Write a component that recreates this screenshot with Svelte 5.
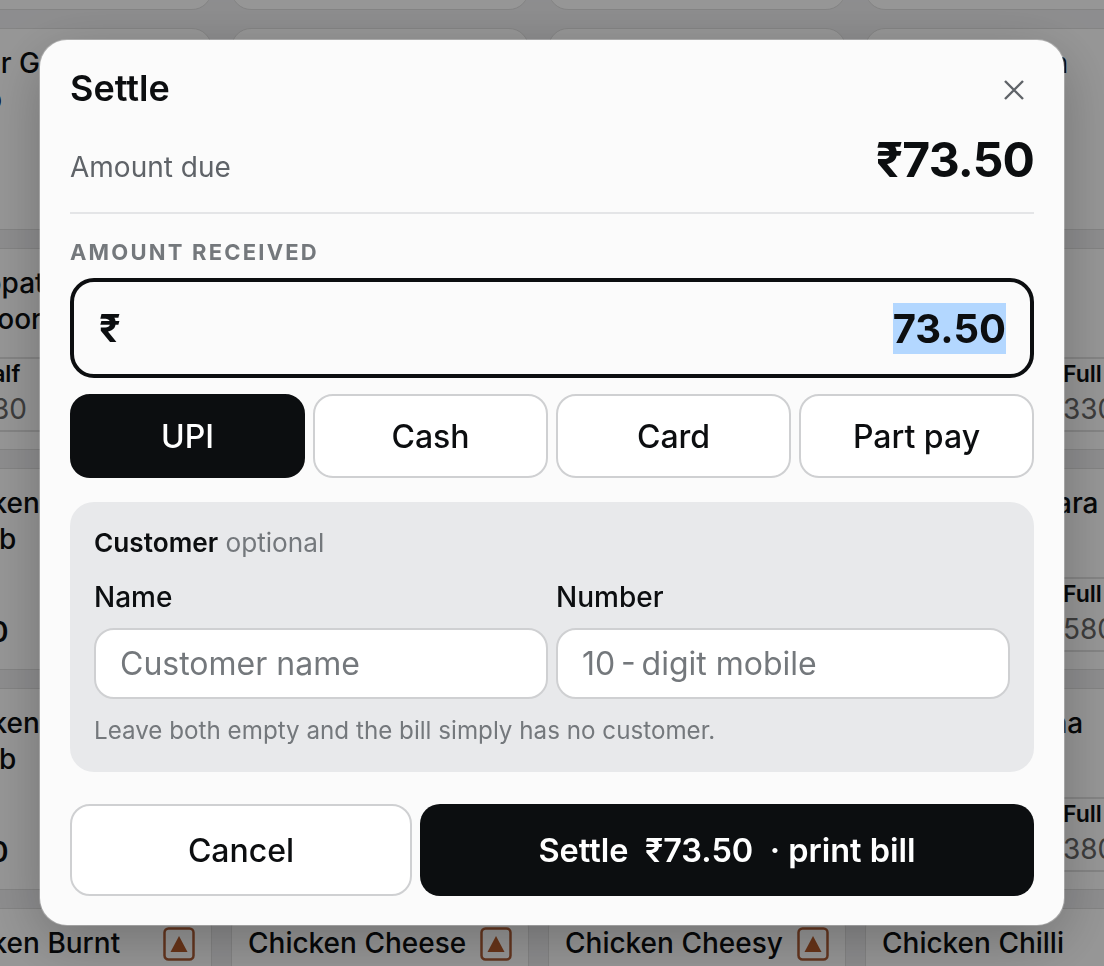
<script>
  let methods = ['UPI', 'Cash', 'Card', 'Part pay'];
  let active = 'UPI';

  // cards sitting behind the dialog: name lines, half/full price, single price
  let rows = [
    [{}, {}, {}, {}],
    [{ name: ['Butter Garlic', 'Wrap'] }, {}, {}, { name: ['Chicken Naan'] }],
    [{ name: ['Chappati', 'Tandoori'], half: 230, full: 330 }, {}, {}, { name: ['Kadhai'], half: 230, full: 330 }],
    [{ name: ['Chicken', 'Kebab'], price: 290 }, {}, {}, { name: ['Chicken Shikara'], half: 320, full: 580 }],
    [{ name: ['Chicken', 'Kebab'], price: 290 }, {}, {}, { name: ['Chicken Bhuna'], half: 220, full: 380 }],
    [{ name: ['Chicken Burnt'], veg: true }, { name: ['Chicken Cheese'], veg: true }, { name: ['Chicken Cheesy'], veg: true }, { name: ['Chicken Chilli'] }]
  ];
</script>

<div class="menu">
  {#each rows as row}
    {#each row as card}
      <div class="card">
        <div class="name">
          <span>
            {#each card.name || [] as line}
              {line}<br />
            {/each}
          </span>
          {#if card.veg}
            <svg class="veg" width="32" height="34" viewBox="0 0 32 34">
              <rect x="1.5" y="1.5" width="29" height="31" rx="4" fill="none" stroke="#a85a34" stroke-width="2.5" />
              <path d="M16 9 L24.5 25 H7.5 Z" fill="#b0582a" />
            </svg>
          {/if}
        </div>
        {#if card.half}
          <div class="prices">
            <div class="price">
              <b>Half</b>
              <span>{card.half}</span>
            </div>
            <div class="price">
              <b>Full</b>
              <span>{card.full}</span>
            </div>
          </div>
        {/if}
        {#if card.price}
          <div class="single">₹{card.price}</div>
        {/if}
      </div>
    {/each}
  {/each}
</div>

<div class="overlay">
  <div class="dialog">
    <div class="head">
      <h2>Settle</h2>
      <button class="close" aria-label="Close">
        <svg width="22" height="22" viewBox="0 0 22 22">
          <path d="M2 2 L20 20 M20 2 L2 20" fill="none" stroke="#5f6368" stroke-width="2.4" />
        </svg>
      </button>
    </div>

    <div class="due">
      <span class="due_label">Amount due</span>
      <span class="due_value">₹73.50</span>
    </div>

    <div class="received_label">AMOUNT RECEIVED</div>
    <div class="received">
      <span class="rupee">₹</span>
      <span class="received_value">73.50</span>
    </div>

    <div class="methods">
      {#each methods as m}
        <button class="method" class:active={m == active}>{m}</button>
      {/each}
    </div>

    <div class="customer">
      <div class="customer_title"><b>Customer</b> optional</div>
      <div class="fields">
        <label>
          Name
          <input type="text" placeholder="Customer name" />
        </label>
        <label>
          Number
          <input type="text" placeholder={'10\u2009-\u2009digit mobile'} />
        </label>
      </div>
      <div class="hint">Leave both empty and the bill simply has no customer.</div>
    </div>

    <div class="actions">
      <button class="cancel">Cancel</button>
      <button class="settle">Settle&nbsp; ₹73.50 &nbsp;· print bill</button>
    </div>
  </div>
</div>

<style>
:global(body) {
  margin: 0;
  height: 966px;
  overflow: hidden;
  background: #ececee;
  font-family: Inter, "Noto Sans", sans-serif;
  color: #0c0e10;
}

.menu {
  display: grid;
  grid-template-columns: repeat(4, 298px);
  grid-auto-rows: 202px;
  gap: 18px 19px;
  margin: -192px 0 0 -86px;
}

.card {
  box-sizing: border-box;
  display: flex;
  flex-direction: column;
  justify-content: space-between;
  padding: 16px 0 17px 16px;
  background: #fbfbfb;
  border: 1px solid #dcdcdc;
  border-radius: 20px;
  overflow: hidden;
}

.name {
  display: flex;
  justify-content: space-between;
  gap: 8px;
  padding-right: 16px;
  font-size: 28px;
  font-weight: 500;
  line-height: 36px;
  white-space: nowrap;
}

.veg {
  flex: none;
  margin-top: 2px;
}

.prices {
  box-sizing: border-box;
  display: grid;
  grid-template-columns: 137px 80px;
  height: 75px;
  margin-right: 16px;
  padding-left: 44px;
  border-top: 2px solid #ddd;
  border-bottom: 2px solid #ddd;
}

.price {
  display: flex;
  flex-direction: column;
}

.price b {
  font-size: 23px;
  font-weight: 600;
  line-height: 30px;
}

.price span {
  font-size: 28px;
  line-height: 40px;
  color: #666;
}

.single {
  margin: 0 0 2px 8px;
  font-size: 28px;
  font-weight: 600;
  line-height: 36px;
}

.overlay {
  position: fixed;
  inset: 0;
  display: flex;
  align-items: flex-start;
  justify-content: center;
  padding-top: 40px;
  background: rgba(0, 0, 0, 0.4);
}

.dialog {
  box-sizing: border-box;
  width: 1024px;
  height: 885px;
  padding: 26px 30px 30px;
  background: #fbfbfb;
  border-radius: 27px;
  box-shadow: 0 0 0 1px rgba(255, 255, 255, 0.25), 0 16px 60px rgba(0, 0, 0, 0.25);
}

.head {
  display: flex;
  align-items: center;
  justify-content: space-between;
  height: 44px;
}

h2 {
  margin: 0;
  font-size: 36px;
  font-weight: 600;
  line-height: 44px;
}

.close {
  display: flex;
  padding: 0;
  margin: 4px 9px 0 0;
  background: none;
  border: none;
}

.due {
  display: flex;
  align-items: baseline;
  justify-content: space-between;
  height: 81px;
  margin-top: 21px;
  border-bottom: 2px solid #e4e5e7;
}

.due_label {
  font-size: 28px;
  color: #5f6368;
}

.due_value {
  font-size: 48px;
  font-weight: 700;
  letter-spacing: -0.85px;
  line-height: 58px;
}

.received_label {
  margin-top: 25px;
  font-size: 22px;
  font-weight: 700;
  letter-spacing: 0.1em;
  line-height: 26px;
  color: #74787c;
}

.received {
  box-sizing: border-box;
  display: flex;
  align-items: center;
  justify-content: space-between;
  height: 100px;
  margin-top: 13px;
  padding: 0 24px 0 25px;
  border: 4px solid #0c0e10;
  border-radius: 24px;
  font-weight: 700;
}

.rupee {
  font-size: 38px;
}

.received_value {
  font-size: 40px;
  line-height: 51px;
  background: #b3d7ff;
}

.methods {
  display: grid;
  grid-template-columns: repeat(4, 1fr);
  gap: 8px;
  margin-top: 16px;
}

button {
  font-family: inherit;
  color: inherit;
}

.method, .cancel {
  background: #fff;
  border: 2px solid #cfd0d2;
  border-radius: 20px;
}

.method {
  height: 84px;
  font-size: 32px;
  font-weight: 500;
}

.method.active {
  background: #0c0e10;
  border-color: #0c0e10;
  color: #fff;
}

.customer {
  height: 270px;
  box-sizing: border-box;
  margin-top: 24px;
  padding: 23px 24px;
  background: #e8e9eb;
  border-radius: 24px;
  font-size: 26.2px;
  line-height: 36px;
  color: #74787c;
}

.customer_title b {
  font-weight: 600;
  color: #0c0e10;
}

.fields {
  display: grid;
  grid-template-columns: 1fr 1fr;
  gap: 8px;
  margin-top: 18px;
}

label {
  display: flex;
  flex-direction: column;
  gap: 13px;
  font-size: 28px;
  font-weight: 500;
  color: #0c0e10;
}

input {
  box-sizing: border-box;
  width: 100%;
  height: 71px;
  padding: 0 24px;
  background: #fff;
  border: 2px solid #cfd0d2;
  border-radius: 20px;
  font-family: inherit;
  font-size: 32px;
}

input::placeholder {
  color: #74787c;
}

.hint {
  margin-top: 14px;
  font-size: 24.2px;
}

.actions {
  display: grid;
  grid-template-columns: 342px 1fr;
  gap: 8px;
  margin-top: 32px;
}

.cancel {
  height: 92px;
  font-size: 32px;
  font-weight: 500;
}

.settle {
  height: 92px;
  background: #0c0e10;
  border: none;
  border-radius: 20px;
  color: #fff;
  font-size: 32.5px;
  font-weight: 600;
}
</style>
